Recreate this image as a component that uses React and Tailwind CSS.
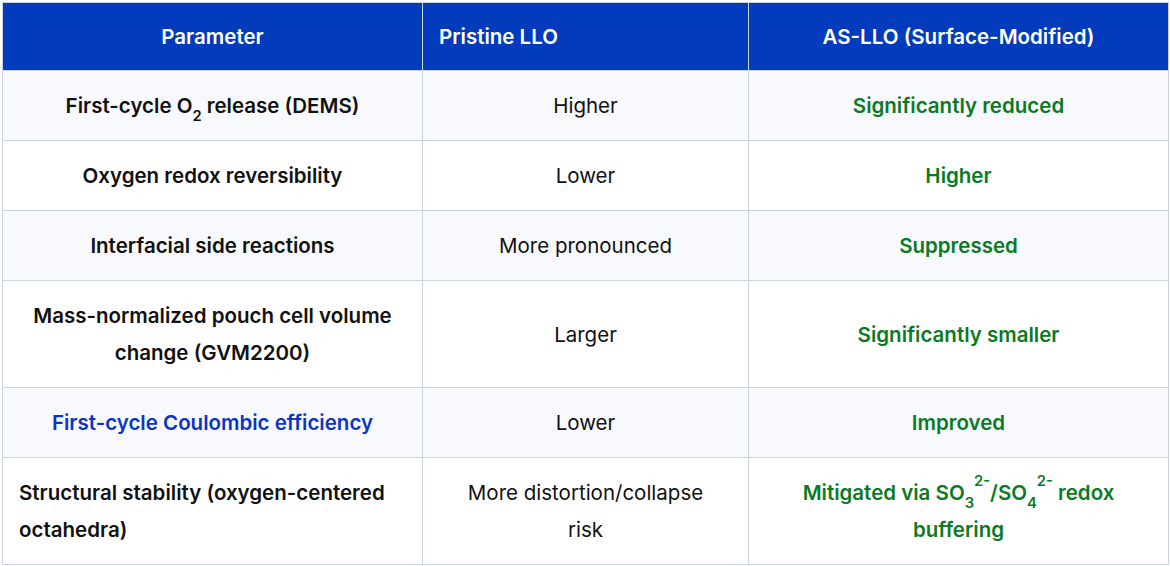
import React from 'react';

const Sub = ({ children }) => <sub className="text-[0.72em] leading-none align-[-0.3em]">{children}</sub>;
const Sup = ({ children }) => <sup className="text-[0.72em] leading-none align-[0.45em]">{children}</sup>;

const rows = [
  {
    param: <>First-cycle O<Sub>2</Sub> release (DEMS)</>,
    pristine: 'Higher',
    modified: 'Significantly reduced',
  },
  { param: 'Oxygen redox reversibility', pristine: 'Lower', modified: 'Higher' },
  { param: 'Interfacial side reactions', pristine: 'More pronounced', modified: 'Suppressed' },
  {
    param: 'Mass-normalized pouch cell volume change (GVM2200)',
    pristine: 'Larger',
    modified: 'Significantly smaller',
  },
  { param: 'First-cycle Coulombic efficiency', pristine: 'Lower', modified: 'Improved', link: true },
  {
    param: 'Structural stability (oxygen-centered octahedra)',
    pristine: 'More distortion/collapse risk',
    modified: (
      <>
        Mitigated via SO<Sub>3</Sub><Sup>2-</Sup>/SO<Sub>4</Sub><Sup>2-</Sup> redox buffering
      </>
    ),
    left: true,
  },
];

function App() {
  return (
    <div className="min-h-screen bg-white p-[2px] font-['Inter',sans-serif] text-[20.5px]">
      <table className="w-[1166px] table-fixed border-collapse border border-[#c9d4e3]">
        <colgroup>
          <col className="w-[420px]" />
          <col className="w-[326px]" />
          <col className="w-[420px]" />
        </colgroup>
        <thead>
          <tr className="bg-[#033bbd] text-white">
            <th className="border-r border-[#c9d4e3] px-4 py-4 text-center font-semibold leading-[35px]">Parameter</th>
            <th className="border-r border-[#c9d4e3] px-4 py-4 text-left font-semibold leading-[35px]">Pristine LLO</th>
            <th className="px-4 py-4 text-center font-semibold leading-[35px]">AS-LLO (Surface-Modified)</th>
          </tr>
        </thead>
        <tbody>
          {rows.map((row, i) => (
            <tr key={i} className={i % 2 === 0 ? 'bg-[#f8f9fc]' : 'bg-white'}>
              <td
                className={`border border-[#c9d4e3] px-4 py-4 leading-[37px] font-semibold ${
                  row.left ? 'text-left' : 'text-center'
                } ${row.link ? 'text-[#0a35c4]' : 'text-[#111]'}`}
              >
                {row.param}
              </td>
              <td className="border border-[#c9d4e3] px-7 py-4 text-center leading-[37px] text-[#111]">
                {row.pristine}
              </td>
              <td className="border border-[#c9d4e3] px-4 py-4 text-center leading-[37px] font-semibold text-[#0b7a24]">
                {row.modified}
              </td>
            </tr>
          ))}
        </tbody>
      </table>
    </div>
  );
}

export default App;
